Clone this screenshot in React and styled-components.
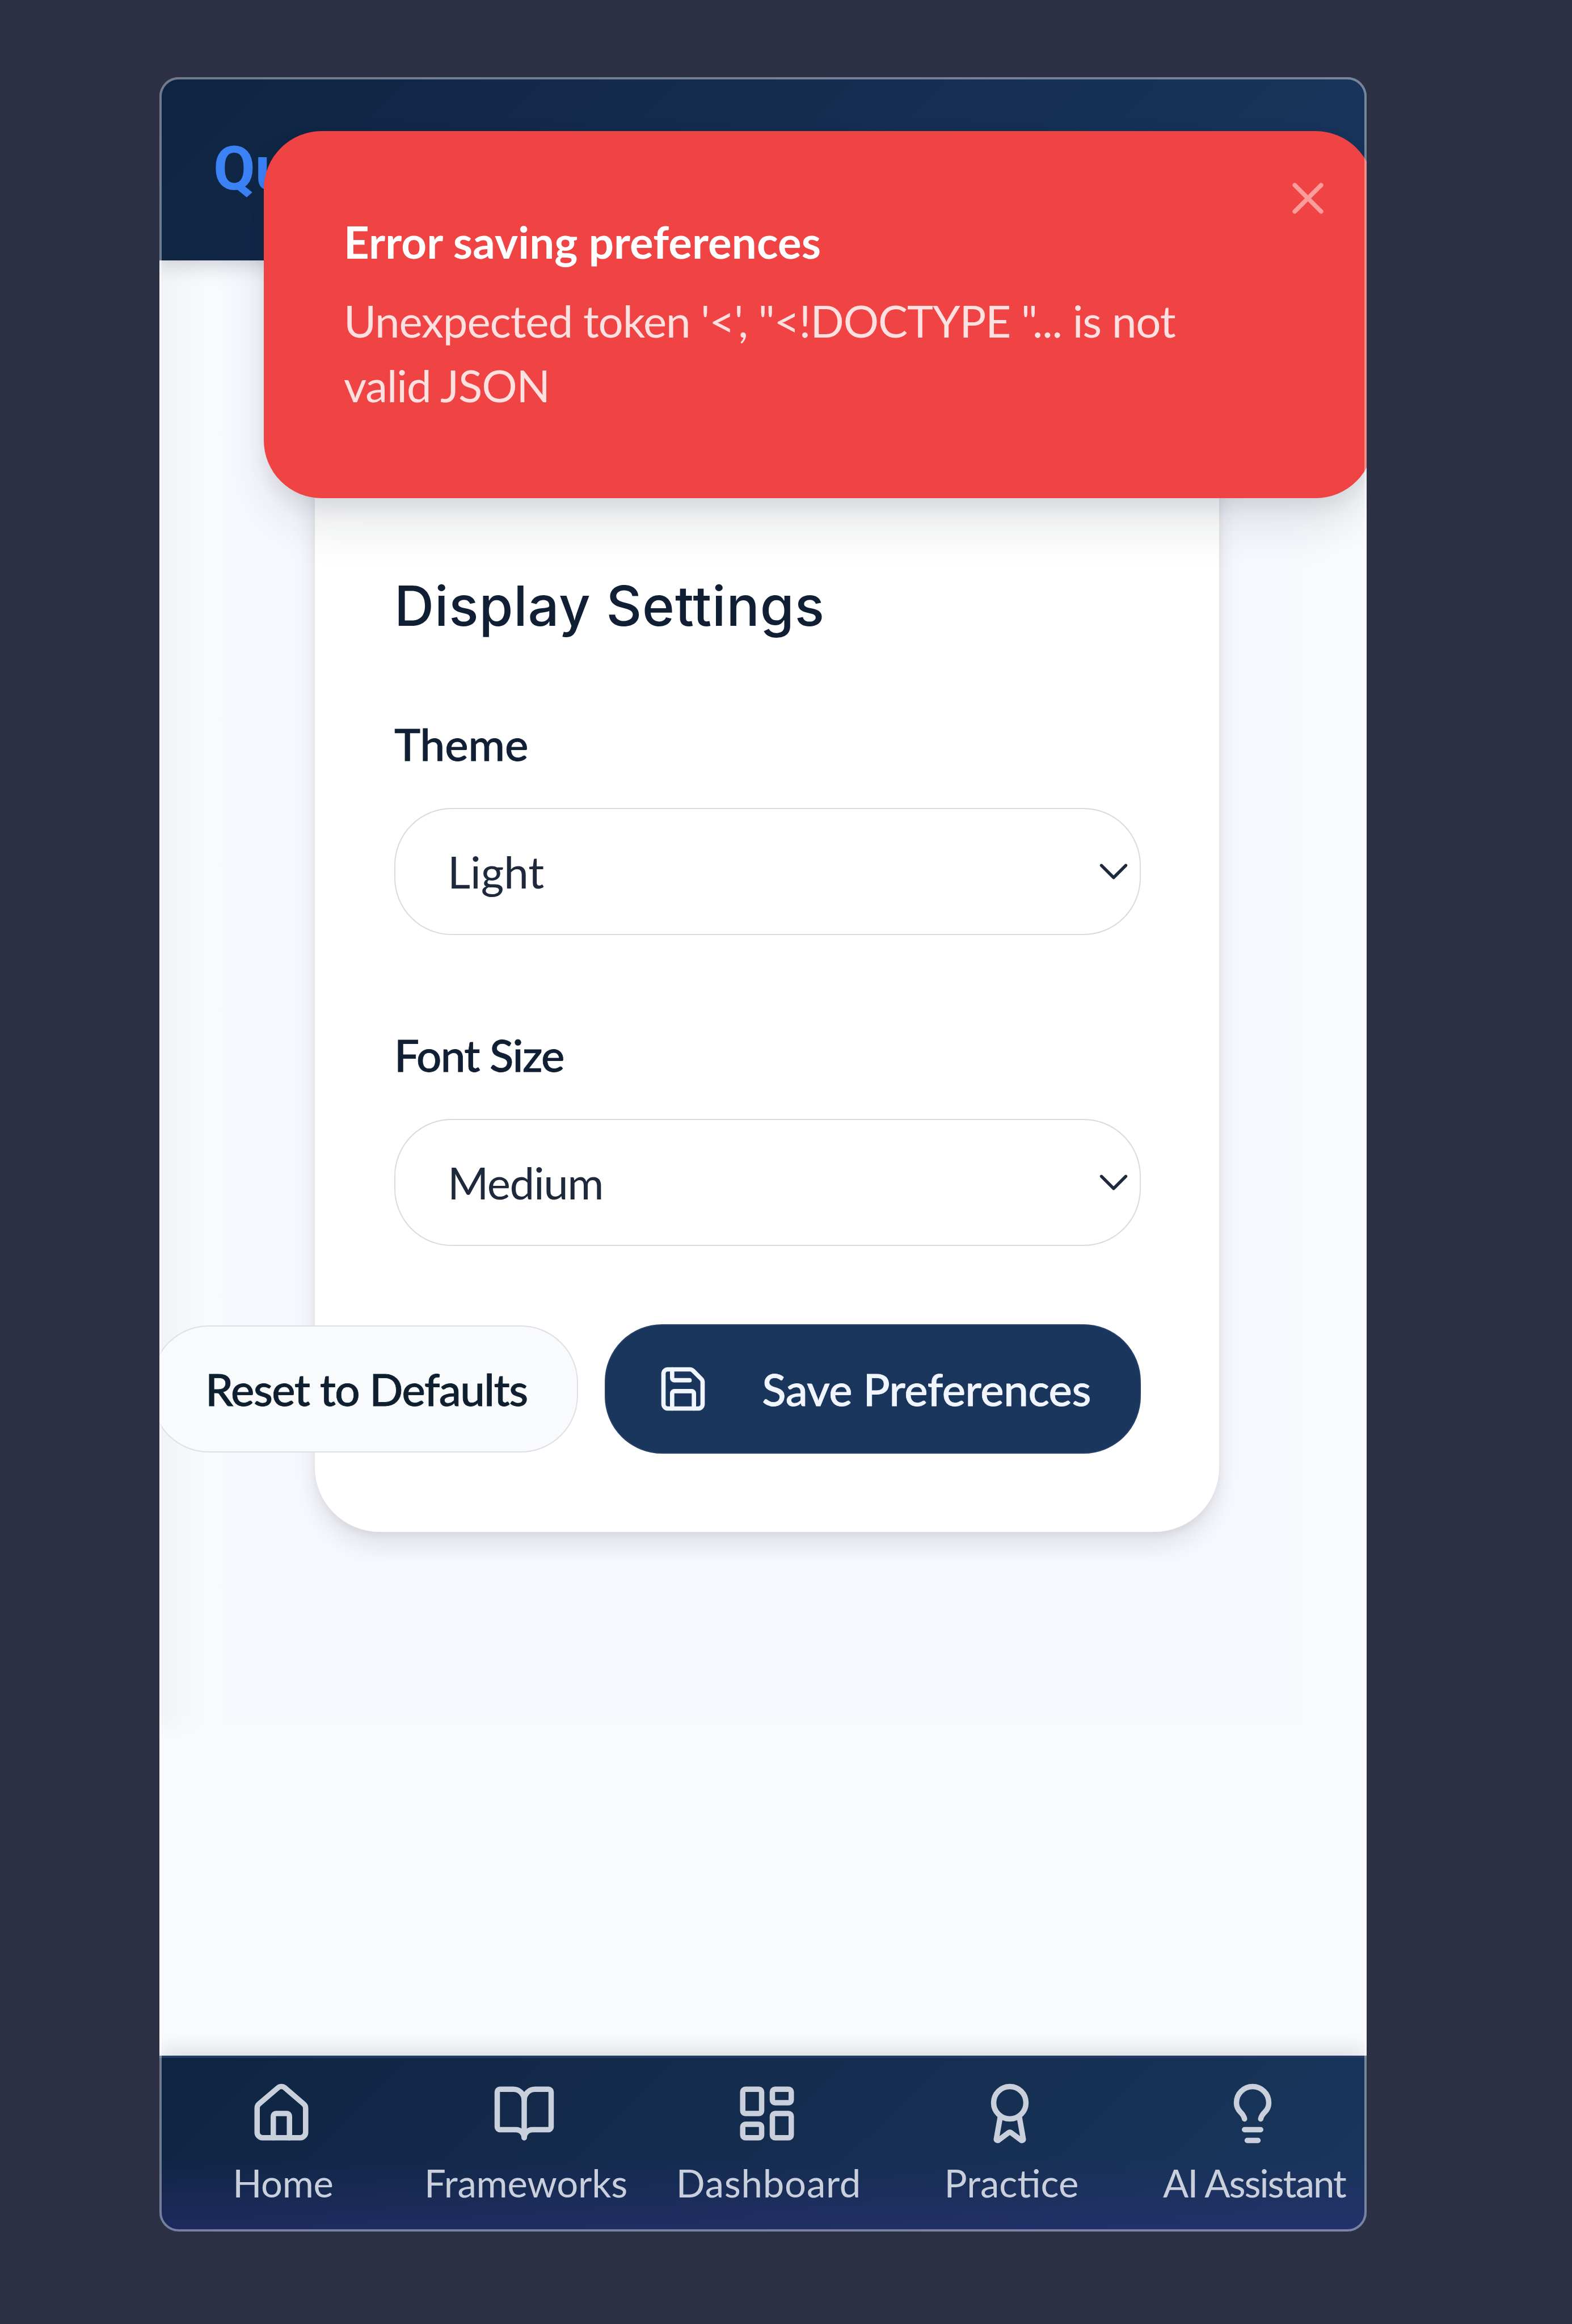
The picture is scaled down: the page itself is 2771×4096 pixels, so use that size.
import React from "react";
import styled, { createGlobalStyle } from "styled-components";
import { House, BookOpen, LayoutDashboard, Award, Lightbulb, Save, X, ChevronDown } from "lucide-react";

const Global = createGlobalStyle`
  * { box-sizing: border-box; }
  html, body { margin: 0; background: #2c3145; }
  body { font-family: Lato, "Open Sans", sans-serif; color: #101f33; }
`;

const Page = styled.div`
  width: 2771px;
  height: 4096px;
  padding: 136px 0 0 281px;
  overflow: hidden;
  background: linear-gradient(180deg, #2e3145 0%, #2c3145 30%, #2c3145 100%);
`;

const Phone = styled.div`
  position: relative;
  display: flex;
  flex-direction: column;
  width: 2128px;
  height: 3797px;
  border-radius: 34px;
  overflow: hidden;
  background: #f9fafc;

  /* glassy rim drawn over every bar and panel */
  &::after {
    content: "";
    position: absolute;
    inset: 0;
    border: 4px solid rgba(255, 255, 255, 0.4);
    border-radius: inherit;
    pointer-events: none;
    z-index: 5;
  }
`;

const Header = styled.header`
  position: relative;
  z-index: 1;
  flex: none;
  display: flex;
  align-items: center;
  height: 323px;
  padding: 0 95px;
  background: linear-gradient(135deg, #0f2442 0%, #1a365d 100%);
  box-shadow: 0 8px 34px rgba(20, 30, 50, 0.2);
`;

const Logo = styled.span`
  font: 700 107px/140px Roboto, sans-serif;
  color: #3b82f6;
`;

const Main = styled.main`
  flex: 1;
  min-height: 0;
  padding: 241px 260px 0 274px;
  background: linear-gradient(180deg, rgba(249, 250, 252, 0) 2560px, #f9fafc 2610px),
    linear-gradient(90deg, #f0f2f3 0, #f6f7f9 40px, #f9fafc 90px, #f8f9fe 120px, #f8f9fe 1990px, #f9fbfc 2080px);
`;

const Card = styled.section`
  padding: 303px 138px 138px 140px;
  border-radius: 114px;
  background: #fff;
  box-shadow: 0 24px 44px rgba(20, 20, 40, 0.1), 0 6px 14px rgba(20, 20, 40, 0.06);
`;

const Title = styled.h2`
  margin: 0 0 121px;
  font: 500 97px/130px Inter, sans-serif;
  letter-spacing: 0.9px;
`;

const Field = styled.div`
  margin-bottom: ${(p) => (p.$last ? 138 : 154)}px;
`;

const Label = styled.label`
  display: block;
  width: max-content;
  margin-bottom: 56px;
  font-size: 78px;
  line-height: 114px;
  font-weight: 500;
  letter-spacing: ${(p) => p.$track || 0}px;
  -webkit-text-stroke: 0.8px currentColor;
`;

const Select = styled.div`
  display: flex;
  align-items: center;
  justify-content: space-between;
  height: 224px;
  padding: 0 3px 0 92px;
  border: 2px solid #d8dbe1;
  border-radius: 101px;
  font-size: 78px;
  color: #1e293b;
`;

const Text = styled.span`
  white-space: nowrap;
  letter-spacing: ${(p) => p.$track || 0}px;
`;

const Actions = styled.div`
  display: flex;
  justify-content: flex-end;
  align-items: center;
  gap: 47px;
`;

const Button = styled.button`
  flex: none;
  display: flex;
  align-items: center;
  justify-content: space-between;
  width: ${(p) => (p.$primary ? 945 : 752)}px;
  height: ${(p) => (p.$primary ? 228 : 224)}px;
  padding: 0 86px 0 ${(p) => (p.$primary ? 90 : 93)}px;
  border: 2px solid ${(p) => (p.$primary ? "#26416b" : "#dfdfe7")};
  border-radius: 101px;
  background: ${(p) => (p.$primary ? "#1a365d" : "#f9fafc")};
  color: ${(p) => (p.$primary ? "#f1f5fd" : "#0f1f2f")};
  font: 500 78px/114px Lato, sans-serif;
  -webkit-text-stroke: 0.8px currentColor;
`;

const Nav = styled.nav`
  flex: none;
  display: grid;
  grid-template-columns: repeat(5, 428px);
  height: 310px;
  padding: 41px 0 0 1px;
  border-top: 4px solid #223c66;
  background: linear-gradient(180deg, rgba(44, 46, 120, 0) 58%, rgba(44, 46, 120, 0.5) 100%),
    linear-gradient(135deg, #0f2442 0%, #1a365d 100%);
  box-shadow: 0 -8px 34px rgba(20, 30, 50, 0.14);
`;

const NavItem = styled.a`
  display: flex;
  flex-direction: column;
  align-items: center;
  gap: 19px;
  color: #c9d0dc;
  font-size: 67px;
  line-height: 92px;
`;

const NavLabel = styled(Text)`
  padding-left: 6px;
`;

const Toast = styled.div`
  position: absolute;
  top: 95px;
  left: 184px;
  z-index: 3;
  width: 1956px;
  height: 647px;
  padding: 138px 138px 138px 141px;
  border-radius: 102px;
  background: #f04343;
  box-shadow: 0 50px 80px rgba(20, 30, 50, 0.1), 0 16px 30px rgba(20, 30, 50, 0.08);
  font-size: 78px;
  line-height: 114px;
`;

const ToastTitle = styled.div`
  width: max-content;
  margin-bottom: 25px;
  font-weight: 700;
  letter-spacing: 0.1px;
  color: #fff;
`;

const ToastText = styled.div`
  max-width: 1600px;
  letter-spacing: -1.1px;
  color: #fde0e0;
`;

const Close = styled.span`
  position: absolute;
  top: 72px;
  right: 69px;
  display: flex;
  color: #fa9d9d;
`;

const items = [
  [House, "Home", -0.3],
  [BookOpen, "Frameworks", -0.2],
  [LayoutDashboard, "Dashboard", 0.8],
  [Award, "Practice", 0],
  [Lightbulb, "AI Assistant", -2],
];

export default function App() {
  return (
    <>
      <Global />
      <Page>
        <Phone>
          <Header>
            <Logo>Qu</Logo>
          </Header>
          <Main>
            <Card>
              <Title>Display Settings</Title>
              <Field>
                <Label>Theme</Label>
                <Select>
                  <Text>Light</Text>
                  <ChevronDown size={86} strokeWidth={1.5} />
                </Select>
              </Field>
              <Field $last>
                <Label $track={-1.6}>Font Size</Label>
                <Select>
                  <Text $track={-1.4}>Medium</Text>
                  <ChevronDown size={86} strokeWidth={1.5} />
                </Select>
              </Field>
              <Actions>
                <Button>
                  <Text $track={-1.5}>Reset to Defaults</Text>
                </Button>
                <Button $primary>
                  <Save size={92} />
                  <Text $track={-0.4}>Save Preferences</Text>
                </Button>
              </Actions>
            </Card>
          </Main>
          <Nav>
            {items.map(([Icon, name, track]) => (
              <NavItem key={name}>
                <Icon size={114} />
                <NavLabel $track={track}>{name}</NavLabel>
              </NavItem>
            ))}
          </Nav>
          <Toast>
            <ToastTitle>Error saving preferences</ToastTitle>
            <ToastText>Unexpected token '&lt;', "&lt;!DOCTYPE "... is not valid JSON</ToastText>
            <Close>
              <X size={93} strokeWidth={2} />
            </Close>
          </Toast>
        </Phone>
      </Page>
    </>
  );
}
